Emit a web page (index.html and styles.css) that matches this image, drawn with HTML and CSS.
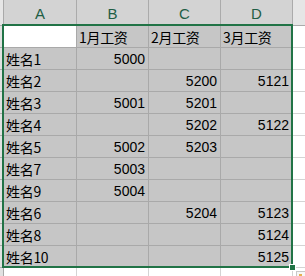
FILE: index.html
```html
<!DOCTYPE html>
<html>
<head>
<meta charset="utf-8">
<link rel="stylesheet" href="styles.css">
</head>
<body>
<div class="sheet">
  <div class="grid">
    <div class="corner"></div>
    <div class="colhdr sel">A</div>
    <div class="colhdr sel">B</div>
    <div class="colhdr sel">C</div>
    <div class="colhdr sel">D</div>
    <div class="colhdr"></div>

    <div class="rowhdr"></div><div class="c active"></div><div class="c t">1月工资</div><div class="c t">2月工资</div><div class="c t">3月工资</div><div class="c out"></div>
    <div class="rowhdr"></div><div class="c t">姓名1</div><div class="c n">5000</div><div class="c"></div><div class="c"></div><div class="c out"></div>
    <div class="rowhdr"></div><div class="c t">姓名2</div><div class="c"></div><div class="c n">5200</div><div class="c n">5121</div><div class="c out"></div>
    <div class="rowhdr"></div><div class="c t">姓名3</div><div class="c n">5001</div><div class="c n">5201</div><div class="c"></div><div class="c out"></div>
    <div class="rowhdr"></div><div class="c t">姓名4</div><div class="c"></div><div class="c n">5202</div><div class="c n">5122</div><div class="c out"></div>
    <div class="rowhdr"></div><div class="c t">姓名5</div><div class="c n">5002</div><div class="c n">5203</div><div class="c"></div><div class="c out"></div>
    <div class="rowhdr"></div><div class="c t">姓名7</div><div class="c n">5003</div><div class="c"></div><div class="c"></div><div class="c out"></div>
    <div class="rowhdr"></div><div class="c t">姓名9</div><div class="c n">5004</div><div class="c"></div><div class="c"></div><div class="c out"></div>
    <div class="rowhdr"></div><div class="c t">姓名6</div><div class="c"></div><div class="c n">5204</div><div class="c n">5123</div><div class="c out"></div>
    <div class="rowhdr"></div><div class="c t">姓名8</div><div class="c"></div><div class="c"></div><div class="c n">5124</div><div class="c out"></div>
    <div class="rowhdr"></div><div class="c t">姓名10</div><div class="c"></div><div class="c"></div><div class="c n">5125</div><div class="c out"></div>

    <div class="rowhdr"></div><div class="c out"></div><div class="c out"></div><div class="c out"></div><div class="c out"></div><div class="c out"></div>
  </div>
  <div class="selbox"></div>
  <div class="handle"></div>
  <div class="qa"><span class="qa-mark"></span></div>
</div>
</body>
</html>
```

FILE: styles.css
```css
html, body {
  margin: 0;
  padding: 0;
  background: #ffffff;
  overflow: hidden;
}

.sheet {
  position: relative;
  width: 305px;
  height: 276px;
  overflow: hidden;
  font-family: "Liberation Sans", "Noto Sans CJK SC", sans-serif;
}

.grid {
  display: grid;
  grid-template-columns: 4px 73px 72px 72px 72px 40px;
  grid-template-rows: 26px repeat(11, 22px) 22px;
}

.grid > div {
  box-sizing: border-box;
  border-right: 1px solid #a9a9a9;
  border-bottom: 1px solid #a9a9a9;
  overflow: hidden;
  white-space: nowrap;
}

.corner {
  background: #e6e6e6;
  border-bottom-color: #ababab !important;
}

.colhdr {
  background: #e6e6e6;
  color: #3c3c3c;
  font-size: 15px;
  display: flex;
  align-items: center;
  justify-content: center;
  padding-top: 1px;
  border-right-color: #ababab !important;
  border-bottom-color: #ababab !important;
}

.colhdr.sel {
  background: #d3d3d3;
  color: #1f5e45;
}

.rowhdr {
  background: #e1e1e1;
  border-bottom-color: #ababab !important;
}

.c {
  background: #c6c6c6;
  font-size: 14px;
  color: #000;
  display: flex;
  align-items: center;
  line-height: 1;
}

.c.active {
  background: #ffffff;
}

.c.t {
  font-family: "Noto Sans CJK SC", "Liberation Sans", sans-serif;
  font-size: 14px;
  padding-left: 2px;
  letter-spacing: -0.3px;
}

.c.n {
  justify-content: flex-end;
  padding-right: 3px;
  padding-top: 1px;
}

.c.out {
  background: #ffffff;
  border-right-color: #d4d4d4 !important;
  border-bottom-color: #d4d4d4 !important;
}

.selbox {
  position: absolute;
  left: 2px;
  top: 24px;
  width: 291px;
  height: 244px;
  box-sizing: border-box;
  border: 2px solid #217346;
}

.handle {
  position: absolute;
  left: 289px;
  top: 264px;
  width: 5px;
  height: 5px;
  background: #217346;
  border: 1px solid #ffffff;
}

.qa {
  position: absolute;
  left: 296px;
  top: 271px;
  width: 12px;
  height: 12px;
  box-sizing: border-box;
  border: 1px solid #c8c8c8;
  background: #f7f7f7;
}

.qa-mark {
  position: absolute;
  left: 2px;
  top: 2px;
  width: 3px;
  height: 3px;
  background: #e6b050;
}
```
